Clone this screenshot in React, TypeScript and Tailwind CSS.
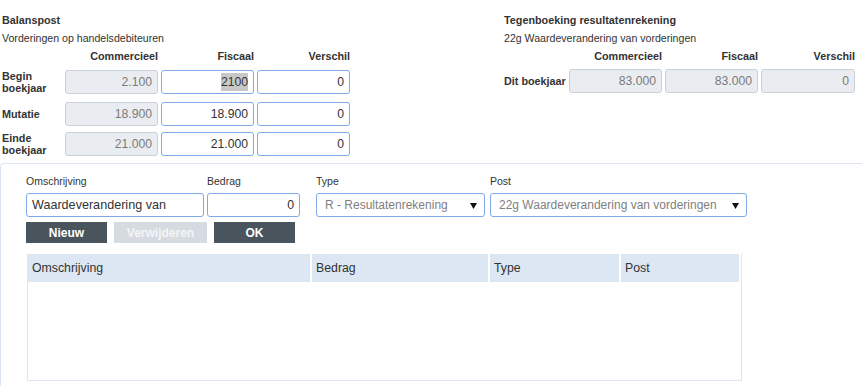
import React from "react";

const topRows = [
  { label: ["Begin", "boekjaar"], commercieel: "2.100", fiscaal: "2100", verschil: "0", selected: true, mt: "mt-[7px]" },
  { label: ["Mutatie"], commercieel: "18.900", fiscaal: "18.900", verschil: "0", selected: false, mt: "mt-[8px]" },
  { label: ["Einde", "boekjaar"], commercieel: "21.000", fiscaal: "21.000", verschil: "0", selected: false, mt: "mt-[6px]" },
];

const tableColumns = [
  { title: "Omschrijving", width: "w-[284px]" },
  { title: "Bedrag", width: "w-[178px]" },
  { title: "Type", width: "w-[131px]" },
  { title: "Post", width: "w-[120px]" },
];

function ReadonlyBox({ value }: { value: string }) {
  return (
    <div className="flex h-[24px] items-center justify-end rounded-[3px] border border-[#c9d0d6] bg-[#e9edf1] pr-[5px] text-[12.2px] text-[#7b7b7b]">
      {value}
    </div>
  );
}

function EditBox({ value, selected }: { value: string; selected?: boolean }) {
  return (
    <div className="flex h-[24px] items-center justify-end rounded-[3px] border border-[#7fa9e8] bg-white pr-[5px] text-[12.2px] text-[#333]">
      <span className={selected ? "bg-[#c8c8c8]" : ""}>{value}</span>
    </div>
  );
}

function ColumnHeaders() {
  return (
    <>
      <div />
      {["Commercieel", "Fiscaal", "Verschil"].map((h) => (
        <div key={h} className="text-right text-[10.8px] font-bold leading-[13px] text-[#333]">
          {h}
        </div>
      ))}
    </>
  );
}

function Dropdown({ value, width }: { value: string; width: string }) {
  return (
    <div className={`${width} flex h-[24px] items-center justify-between rounded-[3px] border border-[#7fa9e8] bg-white pl-[8px] pr-[7px] text-[12px] text-[#808080]`}>
      <span>{value}</span>
      <svg width="7" height="7" viewBox="0 0 7 7">
        <path d="M0 1h7L3.5 7z" fill="#111" />
      </svg>
    </div>
  );
}

export default function App() {
  return (
    <div className="h-[386px] w-[862px] overflow-hidden bg-white font-['Liberation_Sans',Arial,sans-serif] text-[#333]">
      {/* top panels */}
      <div className="flex h-[163px] pt-[14px]">
        <section className="ml-[2px] w-[348px]">
          <div className="text-[10.8px] font-bold leading-[13px]">Balanspost</div>
          <div className="mt-[5px] text-[10.6px] leading-[13px]">Vorderingen op handelsdebiteuren</div>
          <div className="mt-[5px] grid grid-cols-[60px_93px_93px_93px] gap-x-[3px]">
            <ColumnHeaders />
          </div>
          {topRows.map((row) => (
            <div key={row.label.join(" ")} className={`${row.mt} grid grid-cols-[60px_93px_93px_93px] items-center gap-x-[3px]`}>
              <div className="text-[10.8px] font-bold leading-[12px]">
                {row.label.map((l) => (
                  <div key={l}>{l}</div>
                ))}
              </div>
              <ReadonlyBox value={row.commercieel} />
              <EditBox value={row.fiscaal} selected={row.selected} />
              <EditBox value={row.verschil} />
            </div>
          ))}
        </section>

        <section className="ml-[154px] w-[351px]">
          <div className="text-[10.8px] font-bold leading-[13px]">Tegenboeking resultatenrekening</div>
          <div className="mt-[5px] text-[10.6px] leading-[13px]">22g Waardeverandering van vorderingen</div>
          <div className="mt-[5px] grid grid-cols-[62px_93px_93px_94px] gap-x-[3px]">
            <ColumnHeaders />
          </div>
          <div className="mt-[6px] grid grid-cols-[62px_93px_93px_94px] items-center gap-x-[3px]">
            <div className="text-[10.8px] font-bold leading-[12px]">Dit boekjaar</div>
            <ReadonlyBox value="83.000" />
            <ReadonlyBox value="83.000" />
            <ReadonlyBox value="0" />
          </div>
        </section>
      </div>

      {/* boekingsregels */}
      <div className="h-[240px] rounded-tl-[4px] border-l border-t border-[#dde6f1] pl-[25px] pt-[11px]">
        <div className="flex text-[10.5px] leading-[13px]">
          <div className="w-[181px]">Omschrijving</div>
          <div className="w-[109px]">Bedrag</div>
          <div className="w-[174px]">Type</div>
          <div>Post</div>
        </div>
        <div className="mt-[5px] flex items-center">
          <div className="flex h-[24px] w-[178px] items-center rounded-[3px] border border-[#7fa9e8] bg-white pl-[5px] text-[12.6px] text-[#333]">
            Waardeverandering van
          </div>
          <div className="ml-[3px] flex h-[24px] w-[93px] items-center justify-end rounded-[3px] border border-[#7fa9e8] bg-white pr-[5px] text-[12.3px] text-[#333]">
            0
          </div>
          <div className="ml-[16px]">
            <Dropdown value="R - Resultatenrekening" width="w-[169px]" />
          </div>
          <div className="ml-[5px]">
            <Dropdown value="22g Waardeverandering van vorderingen" width="w-[257px]" />
          </div>
        </div>
        <div className="mt-[5px] flex gap-[7px] text-[12px] font-bold">
          <button className="h-[21px] w-[81px] bg-[#4a545c] text-white">Nieuw</button>
          <button className="h-[21px] w-[93px] bg-[#d5dbe0] text-[#f3f5f7]">Verwijderen</button>
          <button className="h-[21px] w-[81px] bg-[#4a545c] text-white">OK</button>
        </div>

        <div className="ml-[1px] mt-[11px] h-[127px] w-[715px] border-x border-b border-[#dde6f1]">
          <div className="flex h-[28px]">
            {tableColumns.map((c) => (
              <div
                key={c.title}
                className={`${c.width} flex items-center border-r-2 border-white bg-[#dce7f3] pl-[4px] text-[12.3px] text-[#333]`}
              >
                {c.title}
              </div>
            ))}
          </div>
        </div>
      </div>
    </div>
  );
}
